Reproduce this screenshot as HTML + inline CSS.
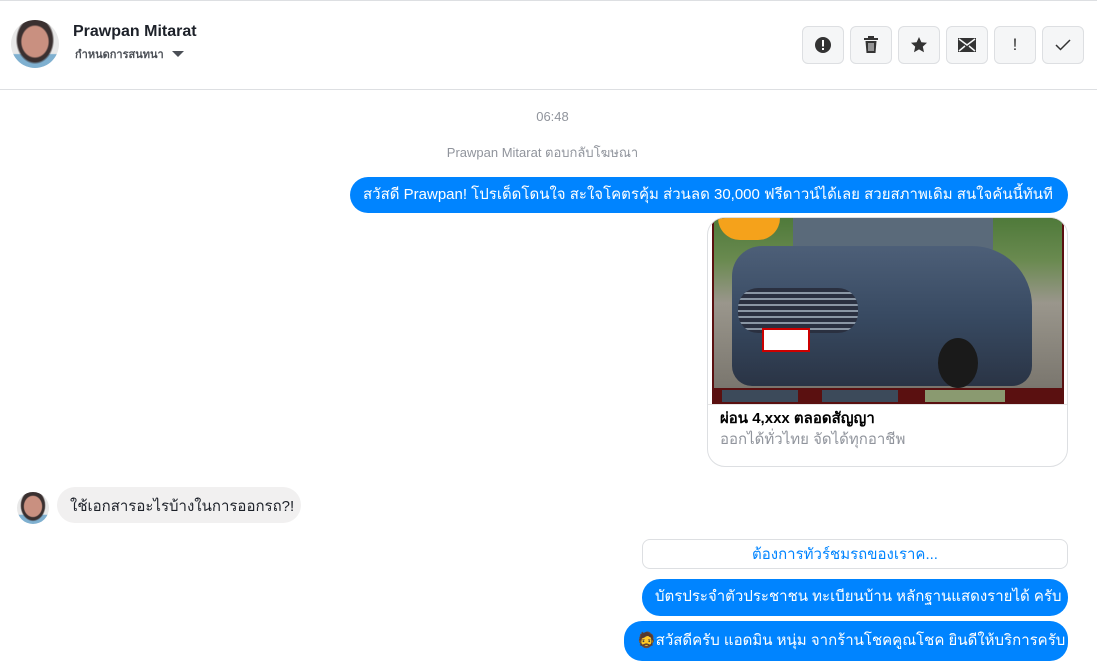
<!DOCTYPE html>
<html><head><meta charset="utf-8"><style>
*{margin:0;padding:0;box-sizing:border-box}
body{width:1097px;height:654px;overflow:hidden;background:#fff;font-family:"Liberation Sans","Noto Sans CJK SC",sans-serif;position:relative}
.a{position:absolute}
.btn{position:absolute;top:26px;width:42px;height:38px;background:#f5f6f7;border:1px solid #dddfe2;border-radius:6px;display:flex;align-items:center;justify-content:center}
.bub{position:absolute;background:#0084ff;color:#fff;font-size:15px;border-radius:18px;padding:0 13px 3px;display:flex;align-items:center;white-space:nowrap}
.av{background:radial-gradient(ellipse 30% 35% at 50% 45%,#c99080 0 90%,transparent 100%),radial-gradient(ellipse 40% 50% at 50% 42%,#3a3030 0 90%,transparent 100%),linear-gradient(180deg,#e8e8e8 0 70%,#7fb0d0 72%)}
</style></head><body>
<div class="a" style="left:0;top:0;width:1097px;height:1px;background:#dddfe2"></div>
<div class="a" style="left:0;top:89px;width:1097px;height:1px;background:#dddfe2"></div>
<div class="a av" style="left:11px;top:20px;width:48px;height:48px;border-radius:50%"></div>
<div class="a" style="left:73px;top:23px;font-size:16px;font-weight:bold;color:#1d2129">Prawpan Mitarat</div>
<div class="a" style="left:75px;top:45px;font-size:11px;color:#4b4f56;font-weight:bold">กำหนดการสนทนา</div>
<div class="a" style="left:172px;top:51px;width:0;height:0;border-left:6px solid transparent;border-right:6px solid transparent;border-top:6px solid #4b4f56"></div>

<div class="btn" style="left:802px"><svg width="18" height="18" viewBox="0 0 18 18"><circle cx="9" cy="9" r="8" fill="#333"/><rect x="8" y="4" width="2" height="6.5" fill="#fff"/><rect x="8" y="12" width="2" height="2" fill="#fff"/></svg></div>
<div class="btn" style="left:850px"><svg width="16" height="18" viewBox="0 0 16 18"><rect x="1" y="2" width="14" height="2" fill="#333"/><rect x="5" y="0" width="6" height="2" fill="#333"/><path d="M2.5 5h11l-1 12h-9z" fill="#333"/><path d="M6 7v8M8 7v8M10 7v8" stroke="#f5f6f7" stroke-width="1"/></svg></div>
<div class="btn" style="left:898px"><svg width="18" height="18" viewBox="0 0 18 18"><path d="M9 1l2.4 5.2 5.6.6-4.2 3.8 1.2 5.6L9 13.4 4 16.2l1.2-5.6L1 6.8l5.6-.6z" fill="#333"/></svg></div>
<div class="btn" style="left:946px"><svg width="18" height="14" viewBox="0 0 18 14"><rect x="0" y="0" width="18" height="14" fill="#333"/><path d="M1 1l8 6 8-6M1 13l6-5M17 13l-6-5" stroke="#f5f6f7" stroke-width="1.5" fill="none"/></svg></div>
<div class="btn" style="left:994px;font-size:17px;color:#333">!</div>
<div class="btn" style="left:1042px"><svg width="16" height="12" viewBox="0 0 16 12"><path d="M1 6l4.5 4.5L15 1" stroke="#333" stroke-width="1.5" fill="none"/></svg></div>

<div class="a" style="left:0;width:1105px;top:109px;text-align:center;font-size:13px;color:#90949c">06:48</div>
<div class="a" style="left:0;width:1085px;top:142px;text-align:center;font-size:13px;color:#90949c">Prawpan Mitarat ตอบกลับโฆษณา</div>

<div class="bub" style="left:350px;top:177px;width:718px;height:36px">สวัสดี Prawpan! โปรเด็ดโดนใจ สะใจโคตรคุ้ม ส่วนลด 30,000 ฟรีดาวน์ได้เลย สวยสภาพเดิม สนใจคันนี้ทันที</div>

<div class="a" style="left:707px;top:217px;width:361px;height:250px;border:1px solid #dddfe2;border-radius:18px;overflow:hidden">
 <div class="a" style="left:4px;top:0;width:352px;height:186px;background:#5a1010"></div>
 <div class="a" style="left:6px;top:0;width:348px;height:170px;background:linear-gradient(180deg,#4f7a3a 0%,#6a8a50 25%,#9a968c 50%,#7a766e 100%)"></div>
 <div class="a" style="left:85px;top:0;width:200px;height:40px;background:#5a6a7a;border-radius:0 0 10px 10px"></div>
 <div class="a" style="left:24px;top:28px;width:300px;height:140px;border-radius:30px 60px 20px 20px;background:linear-gradient(180deg,#4d5f78 0%,#384a62 50%,#2a3445 100%)"></div>
 <div class="a" style="left:30px;top:70px;width:120px;height:45px;border-radius:20px;background:repeating-linear-gradient(180deg,#2a3040 0 4px,#8a96a4 4px 6px)"></div>
 <div class="a" style="left:10px;top:0;width:62px;height:22px;border-radius:0 0 30px 30px;background:#f5a21b"></div>
 <div class="a" style="left:54px;top:110px;width:48px;height:24px;background:#fff;border:2px solid #c00"></div>
 <div class="a" style="left:230px;top:120px;width:40px;height:50px;border-radius:50%;background:#1a1a1a"></div>
 <div class="a" style="left:12px;top:170px;width:80px;height:16px;background:#3c4a5a;border:2px solid #5a1010"></div>
 <div class="a" style="left:112px;top:170px;width:80px;height:16px;background:#3c4a5a;border:2px solid #5a1010"></div>
 <div class="a" style="left:215px;top:170px;width:84px;height:16px;background:#8a9a70;border:2px solid #5a1010"></div>
 <div class="a" style="left:0;top:186px;width:361px;height:1px;background:#e5e5e5"></div>
 <div class="a" style="left:12px;top:188px;font-size:15px;font-weight:bold;color:#000">ผ่อน 4,xxx ตลอดสัญญา</div>
 <div class="a" style="left:12px;top:209px;font-size:15px;color:#90949c">ออกได้ทั่วไทย จัดได้ทุกอาชีพ</div>
</div>

<div class="a av" style="left:17px;top:492px;width:32px;height:32px;border-radius:50%"></div>
<div class="a" style="left:57px;top:487px;width:244px;height:36px;border-radius:18px;background:#f1f0f0;font-size:15px;color:#1d2129;padding:7px 13px;white-space:nowrap">ใช้เอกสารอะไรบ้างในการออกรถ?!</div>

<div class="a" style="left:642px;top:539px;width:426px;height:30px;border:1px solid #dddfe2;border-radius:8px;text-align:center;color:#0084ff;font-size:15px;padding-top:2px;padding-right:20px">ต้องการทัวร์ชมรถของเราค...</div>

<div class="bub" style="left:642px;top:579px;width:426px;height:37px">บัตรประจำตัวประชาชน ทะเบียนบ้าน หลักฐานแสดงรายได้ ครับ</div>
<div class="bub" style="left:624px;top:621px;width:444px;height:40px;padding-left:13px">🧔สวัสดีครับ แอดมิน หนุ่ม จากร้านโชคคูณโชค ยินดีให้บริการครับ</div>
</body></html>
